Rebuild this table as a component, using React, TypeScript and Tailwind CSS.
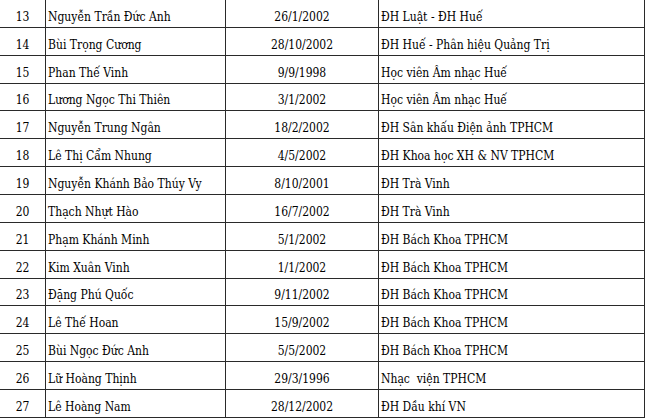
const rows = [
  { no: 13, name: 'Nguyễn Trần Đức Anh', dob: '26/1/2002', school: 'ĐH Luật - ĐH Huế' },
  { no: 14, name: 'Bùi Trọng Cương', dob: '28/10/2002', school: 'ĐH Huế - Phân hiệu Quảng Trị' },
  { no: 15, name: 'Phan Thế Vinh', dob: '9/9/1998', school: 'Học viên Âm nhạc Huế' },
  { no: 16, name: 'Lương Ngọc Thi Thiên', dob: '3/1/2002', school: 'Học viên Âm nhạc Huế' },
  { no: 17, name: 'Nguyễn Trung Ngân', dob: '18/2/2002', school: 'ĐH Sân khấu Điện ảnh TPHCM' },
  { no: 18, name: 'Lê Thị Cẩm Nhung', dob: '4/5/2002', school: 'ĐH Khoa học XH & NV TPHCM' },
  { no: 19, name: 'Nguyễn Khánh Bảo Thúy Vy', dob: '8/10/2001', school: 'ĐH Trà Vinh' },
  { no: 20, name: 'Thạch Nhựt Hào', dob: '16/7/2002', school: 'ĐH Trà Vinh' },
  { no: 21, name: 'Phạm Khánh Minh', dob: '5/1/2002', school: 'ĐH Bách Khoa TPHCM' },
  { no: 22, name: 'Kim Xuân Vinh', dob: '1/1/2002', school: 'ĐH Bách Khoa TPHCM' },
  { no: 23, name: 'Đặng Phú Quốc', dob: '9/11/2002', school: 'ĐH Bách Khoa TPHCM' },
  { no: 24, name: 'Lê Thế Hoan', dob: '15/9/2002', school: 'ĐH Bách Khoa TPHCM' },
  { no: 25, name: 'Bùi Ngọc Đức Anh', dob: '5/5/2002', school: 'ĐH Bách Khoa TPHCM' },
  { no: 26, name: 'Lữ Hoàng Thịnh', dob: '29/3/1996', school: 'Nhạc  viện TPHCM' },
  { no: 27, name: 'Lê Hoàng Nam', dob: '28/12/2002', school: 'ĐH Dầu khí VN' },
];

const cell = "font-['DejaVu_Serif_Condensed','DejaVu_Serif',serif] text-[12px] leading-[16px] text-black";

const App = () => {
  return (
    <div className="w-[645px] h-[420px] overflow-hidden bg-white">
      {/* Sheet rows */}
      {rows.map(row => (
        <div key={row.no} className="flex h-[27.86px] box-border border-b border-[#2a2a2a]">
          <div className="w-[46px] shrink-0 flex items-end justify-center pb-[2px] border-r border-[#2a2a2a]">
            <span className={cell}>{row.no}</span>
          </div>
          <div className="w-[180px] shrink-0 flex items-end pl-[2px] pb-[2px] border-r border-[#2a2a2a] whitespace-nowrap">
            <span className={cell}>{row.name}</span>
          </div>
          <div className="w-[153px] shrink-0 flex items-end justify-center pb-[2px] border-r border-[#2a2a2a]">
            <span className={cell}>{row.dob}</span>
          </div>
          <div className="w-[266px] shrink-0 flex items-end pl-[2px] pb-[2px] border-r border-[#2a2a2a] whitespace-pre">
            <span className={cell}>{row.school}</span>
          </div>
        </div>
      ))}
    </div>
  );
};

export default App;
